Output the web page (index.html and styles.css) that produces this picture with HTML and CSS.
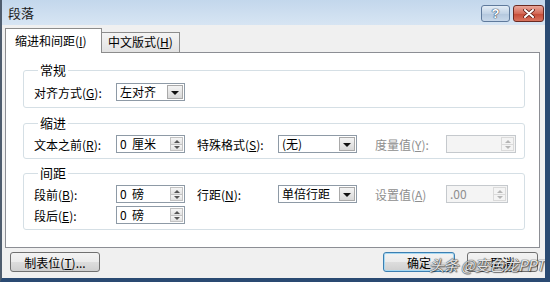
FILE: index.html
```html
<!doctype html>
<html lang="zh-CN">
  <head>
    <meta charset="utf-8">
    <title>段落</title>
    <link rel="stylesheet" href="styles.css">
  </head>
  <body>
    <div class="window">
      <div class="titlebar">
        <span class="title">段落</span>
        <div class="caption-btns">
          <span class="cap help">?</span>
          <span class="cap close">
            <svg width="12" height="9" viewBox="0 0 12 9">
              <path d="M2 1 L10 8 M10 1 L2 8" stroke="#5a1a12" stroke-width="3.6" stroke-linecap="round"/>
              <path d="M2 1 L10 8 M10 1 L2 8" stroke="#fff" stroke-width="2" stroke-linecap="round"/>
            </svg>
          </span>
        </div>
      </div>
      <div class="client">
        <div class="tabs">
          <div class="tab active">缩进和间距(<u>I</u>)</div>
          <div class="tab">中文版式(<u>H</u>)</div>
        </div>
        <div class="panel">
          <fieldset class="group">
            <legend>常规</legend>
            <div class="grid">
              <span>对齐方式(<u>G</u>):</span>
              <div class="select w69"><span class="val">左对齐</span><span class="drop"></span></div>
            </div>
          </fieldset>
          <fieldset class="group">
            <legend>缩进</legend>
            <div class="grid">
              <span>文本之前(<u>R</u>):</span>
              <div class="spin w69"><span class="val">0&nbsp;&nbsp;厘米</span><span class="arrows"><i class="up"></i><i class="down"></i></span></div>
              <span>特殊格式(<u>S</u>):</span>
              <div class="select w79"><span class="val">(无)</span><span class="drop"></span></div>
              <span class="off">度量值(<u>Y</u>):</span>
              <div class="spin w70 disabled"><span class="val"></span><span class="arrows"><i class="up"></i><i class="down"></i></span></div>
            </div>
          </fieldset>
          <fieldset class="group">
            <legend>间距</legend>
            <div class="grid">
              <span>段前(<u>B</u>):</span>
              <div class="spin w69"><span class="val">0&nbsp;&nbsp;磅</span><span class="arrows"><i class="up"></i><i class="down"></i></span></div>
              <span>行距(<u>N</u>):</span>
              <div class="select w79"><span class="val">单倍行距</span><span class="drop"></span></div>
              <span class="off">设置值(<u>A</u>)</span>
              <div class="spin w62 disabled"><span class="val">.00</span><span class="arrows"><i class="up"></i><i class="down"></i></span></div>
              <span>段后(<u>E</u>):</span>
              <div class="spin w69"><span class="val">0&nbsp;&nbsp;磅</span><span class="arrows"><i class="up"></i><i class="down"></i></span></div>
            </div>
          </fieldset>
        </div>
        <div class="actions">
          <button class="btn tabstops">制表位(<u>T</u>)...</button>
          <button class="btn ok">确定</button>
          <button class="btn cancel">取消</button>
        </div>
      </div>
      <div class="watermark">头条 @变色龙PPT</div>
    </div>
  </body>
</html>
```

FILE: styles.css
```css
body {
  margin: 0;
  font-family: "Noto Sans CJK SC", "Liberation Sans", sans-serif;
  font-size: 12px;
  color: #000;
}
u {
  text-decoration: underline;
}
.window {
  position: relative;
  width: 550px;
  height: 282px;
  box-sizing: border-box;
  display: flex;
  flex-direction: column;
  border-left: 2px solid #4f5d6e;
  border-right: 5px solid #2a4a72;
  border-bottom: 4px solid #2a4a72;
  background: #f0f0f0;
  overflow: hidden;
}
.titlebar {
  height: 25px;
  flex: none;
  display: flex;
  align-items: center;
  justify-content: space-between;
  padding-left: 6px;
  background: linear-gradient(#c3d7ec, #d7e5f3);
}
.title {
  font-size: 13px;
  color: #1a1a1a;
}
.caption-btns {
  display: flex;
  gap: 3px;
  margin-right: 1px;
  align-self: flex-start;
  margin-top: 5px;
}
.cap {
  height: 15px;
  border: 1px solid #5f7a9c;
  border-radius: 3px;
  display: flex;
  align-items: center;
  justify-content: center;
}
.help {
  width: 27px;
  background: linear-gradient(#e4edf6, #c2d3e6 50%, #b3c7dd 51%, #c8d8ea);
  color: #fff;
  font-family: "Liberation Sans", sans-serif;
  font-weight: bold;
  font-size: 13px;
  text-shadow: 0 0 1px #2d4460, 0 0 1px #2d4460, 0 0 1px #2d4460;
}
.close {
  width: 29px;
  border-color: #6a2a22;
  background: linear-gradient(#eaa79b, #d46a57 50%, #c44a36 51%, #d9735e);
}
.client {
  flex: 1;
  display: flex;
  flex-direction: column;
  padding: 3px 5px 0 3px;
}
.tabs {
  display: flex;
  align-items: flex-end;
  height: 25px;
  margin-bottom: -1px;
  position: relative;
  z-index: 1;
}
.tab {
  box-sizing: border-box;
  height: 21px;
  width: 78px;
  padding-left: 6px;
  border: 1px solid #8c8c8c;
  border-left: none;
  background: linear-gradient(#f4f4f4, #e2e2e2);
  line-height: 18px;
}
.tab.active {
  width: 97px;
  height: 25px;
  padding-left: 9px;
  border-left: 1px solid #8c8c8c;
  border-bottom: none;
  background: #fff;
  line-height: 24px;
}
.panel {
  height: 196px;
  box-sizing: border-box;
  border: 1px solid #8c8e94;
  background: #fff;
  padding: 9px 14px 0 17px;
}
.group {
  margin: 0;
  border: 1px solid #d5dfe5;
  border-radius: 3px;
  padding: 3px 0 4px 10px;
}
.group:first-child {
  padding-top: 4px;
  padding-bottom: 5px;
}
.group + .group {
  margin-top: 7px;
}
.group:last-child {
  margin-top: 6px;
}
.group legend {
  padding: 0 2px;
  margin-left: 4px;
  line-height: 16px;
  font-size: 13px;
}
.grid {
  display: grid;
  grid-template-columns: 82px 81px 81px 97px 71px 70px;
  grid-auto-rows: 20px;
  row-gap: 1px;
  align-items: center;
  white-space: nowrap;
}
.off {
  color: #8e8e8e;
}
.select,
.spin {
  box-sizing: border-box;
  height: 18px;
  display: flex;
  align-items: stretch;
  border: 1px solid #8e9aa6;
  background: #fff;
}
.w62 { width: 62px; }
.w69 { width: 69px; }
.w70 { width: 70px; }
.w79 { width: 79px; }
.val {
  flex: 1;
  padding-left: 3px;
  line-height: 16px;
}
.drop {
  width: 14px;
  margin: 1px;
  border: 1px solid #a9a9a9;
  background: linear-gradient(#f4f4f4, #d8d8d8);
  position: relative;
}
.drop::after {
  content: "";
  position: absolute;
  left: 3px;
  top: 5px;
  border-left: 4px solid transparent;
  border-right: 4px solid transparent;
  border-top: 4px solid #111;
}
.arrows {
  width: 13px;
  display: flex;
  flex-direction: column;
  margin: 1px;
}
.arrows i {
  flex: 1;
  border: 1px solid #c2c2c2;
  background: linear-gradient(#f6f6f6, #e2e2e2);
  position: relative;
}
.arrows i + i {
  border-top: none;
}
.arrows i::after {
  content: "";
  position: absolute;
  left: 3px;
  top: 2px;
  border-left: 3px solid transparent;
  border-right: 3px solid transparent;
}
.arrows .up::after {
  border-bottom: 3px solid #555;
}
.arrows .down::after {
  top: 1px;
  border-top: 3px solid #555;
}
.disabled {
  border-color: #c5c9cd;
  background: #f4f4f4;
  color: #8e8e8e;
}
.disabled .arrows i {
  border-color: #dadada;
  background: #f4f4f4;
}
.disabled .arrows .up::after {
  border-bottom-color: #b5b5b5;
}
.disabled .arrows .down::after {
  border-top-color: #b5b5b5;
}
.actions {
  display: flex;
  margin-top: 4px;
  padding: 0 2px 0 5px;
}
.btn {
  height: 20px;
  box-sizing: border-box;
  border: 1px solid #707070;
  border-radius: 3px;
  background: linear-gradient(#f3f3f3, #ebebeb 50%, #dddddd 51%, #cfcfcf);
  font: inherit;
  padding: 0;
  line-height: 17px;
}
.tabstops {
  width: 90px;
}
.ok {
  width: 72px;
  margin-left: auto;
  border-color: #3c7fb1;
  box-shadow: inset 0 0 0 1px #a6d8f2;
}
.cancel {
  width: 71px;
  margin-left: 12px;
}
.watermark {
  position: absolute;
  left: 427px;
  top: 255px;
  font-size: 15px;
  line-height: 20px;
  white-space: nowrap;
  font-style: italic;
  letter-spacing: -0.5px;
  color: rgba(255, 255, 255, 0.88);
  text-shadow: 0 0 1px #333, 0 0 1px #333, 1px 1px 1px rgba(0, 0, 0, 0.5);
}
```
